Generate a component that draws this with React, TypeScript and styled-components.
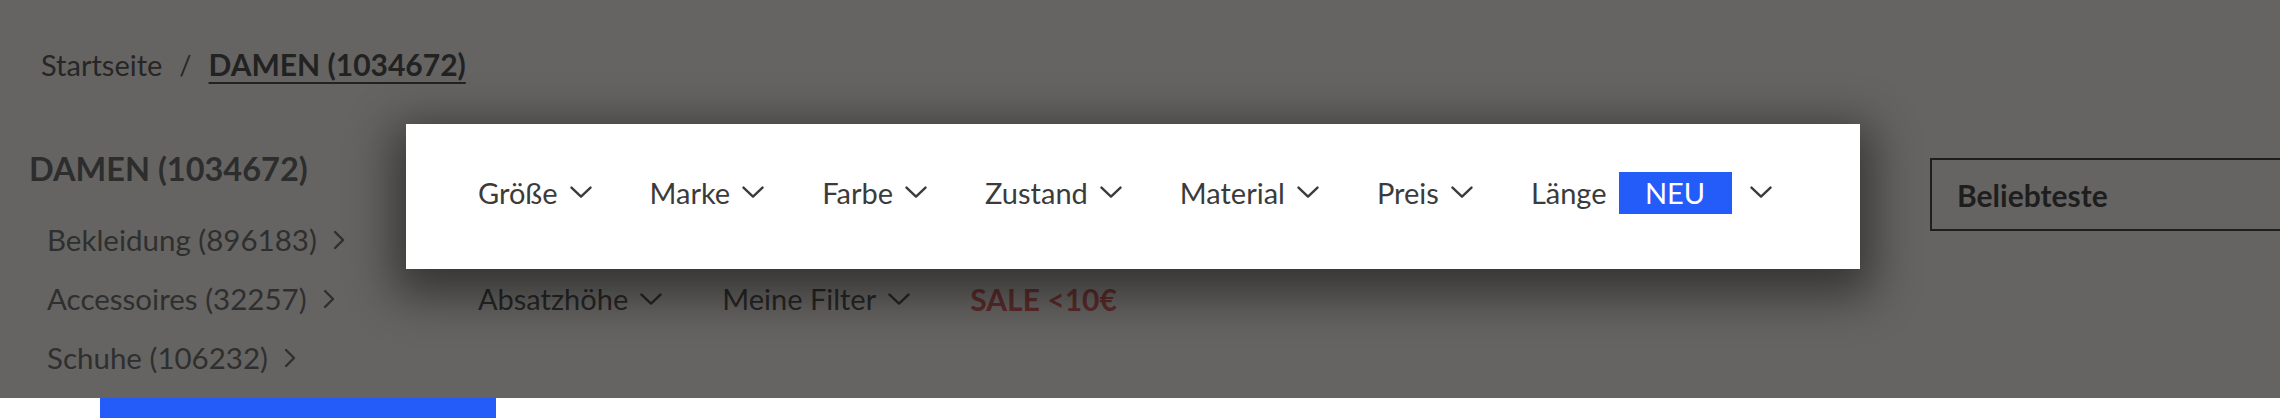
import styled, { createGlobalStyle } from "styled-components";

const GlobalStyle = createGlobalStyle`
    body {
        margin: 0;
        background: #ffffff;
        font-family: Lato, "Open Sans", sans-serif;
        overflow: hidden;
    }
`;

const Chevron = ({ dir = "down", size = 22 }: { dir?: "down" | "right"; size?: number }) =>
    dir === "down" ? (
        <svg width={size} height={size * 0.55} viewBox="0 0 22 12" fill="none">
            <path d="M1.5 1.5 L11 10.5 L20.5 1.5" stroke="currentColor" strokeWidth="2.4" strokeLinecap="round" strokeLinejoin="round" />
        </svg>
    ) : (
        <svg width={size * 0.55} height={size} viewBox="0 0 12 22" fill="none">
            <path d="M2 3 L10 11 L2 19" stroke="currentColor" strokeWidth="2.4" strokeLinecap="round" strokeLinejoin="round" />
        </svg>
    );

const filtersTop = ["Größe", "Marke", "Farbe", "Zustand", "Material", "Preis"];
const filtersBottom = ["Absatzhöhe", "Meine Filter"];
const categories = [
    { name: "Bekleidung", count: 896183 },
    { name: "Accessoires", count: 32257 },
    { name: "Schuhe", count: 106232 },
];

const App = () => {
    return (
        <>
            <GlobalStyle />
            <Page>
                <Dimmed>
                    <Breadcrumb>
                        <Crumb>Startseite</Crumb>
                        <Slash>/</Slash>
                        <CrumbActive>DAMEN (1034672)</CrumbActive>
                    </Breadcrumb>
                    <Main>
                        <Sidebar>
                            <SideTitle>DAMEN (1034672)</SideTitle>
                            <CategoryList>
                                {categories.map((c) => (
                                    <CategoryItem key={c.name}>
                                        {c.name} ({c.count})
                                        <Chevron dir="right" size={22} />
                                    </CategoryItem>
                                ))}
                            </CategoryList>
                        </Sidebar>
                        <FilterArea>
                            <Spotlight>
                                {filtersTop.map((f) => (
                                    <FilterButton key={f}>
                                        {f}
                                        <Chevron />
                                    </FilterButton>
                                ))}
                                <FilterButton>
                                    Länge
                                    <NewBadge>NEU</NewBadge>
                                    <Chevron />
                                </FilterButton>
                            </Spotlight>
                            <FilterRow>
                                {filtersBottom.map((f) => (
                                    <FilterButton key={f} $dim>
                                        {f}
                                        <Chevron />
                                    </FilterButton>
                                ))}
                                <SaleLink>SALE &lt;10€</SaleLink>
                            </FilterRow>
                        </FilterArea>
                        <SortSelect>Beliebteste</SortSelect>
                    </Main>
                </Dimmed>
                <BottomStrip>
                    <BlueBar />
                </BottomStrip>
            </Page>
        </>
    );
};

export default App;

// Styled-components
const Page = styled.div`
    width: 2280px;
    height: 418px;
    display: flex;
    flex-direction: column;
    `;

const Dimmed = styled.div`
    height: 398px;
    background: #656462;
    display: flex;
    flex-direction: column;
    overflow: hidden;
    `;

const Breadcrumb = styled.nav`
    display: flex;
    align-items: center;
    gap: 17px;
    padding: 44px 0 0 41px;
    height: 40px;
    font-size: 29px;
    color: #262626;
    `;

const Crumb = styled.span``;

const Slash = styled.span`
    font-size: 27px;
    `;

const CrumbActive = styled.span`
    font-size: 30px;
    font-weight: 700;
    color: #222222;
    text-decoration: underline;
    text-decoration-thickness: 2px;
    text-underline-offset: 6px;
    `;

const Main = styled.div`
    display: flex;
    align-items: flex-start;
    padding-top: 40px;
    `;

const Sidebar = styled.aside`
    width: 377px;
    padding-left: 29px;
    padding-top: 25px;
    `;

const SideTitle = styled.h2`
    margin: 0;
    font-size: 32.5px;
    font-weight: 700;
    color: #2d2d2d;
    line-height: 40px;
    `;

const CategoryList = styled.ul`
    list-style: none;
    margin: 31px 0 0;
    padding: 0 0 0 18px;
    display: flex;
    flex-direction: column;
    gap: 19px;
    `;

const CategoryItem = styled.li`
    display: flex;
    align-items: center;
    gap: 16px;
    font-size: 29.5px;
    line-height: 40px;
    color: #2f2f2f;
    `;

const FilterArea = styled.div`
    width: 1454px;
    display: flex;
    flex-direction: column;
    `;

const Spotlight = styled.div`
    height: 145px;
    background: #ffffff;
    display: flex;
    align-items: center;
    gap: 58px;
    padding: 0 72px 8px;
    box-sizing: border-box;
    box-shadow: 0 14px 44px 12px rgba(0, 0, 0, 0.48);
    position: relative;
    z-index: 1;
    `;

const FilterRow = styled.div`
    display: flex;
    align-items: center;
    gap: 60px;
    padding: 10px 72px 0;
    `;

const FilterButton = styled.span<{ $dim?: boolean }>`
    display: inline-flex;
    align-items: center;
    gap: 12px;
    font-size: 29px;
    line-height: 40px;
    color: ${(p) => (p.$dim ? "#262626" : "#3b3b3b")};
    `;

const NewBadge = styled.span`
    display: inline-flex;
    align-items: center;
    justify-content: center;
    width: 113px;
    height: 42px;
    margin-right: 6px;
    background: #245cf9;
    color: #ffffff;
    font-size: 29px;
    `;

const SaleLink = styled.span`
    font-size: 30px;
    font-weight: 700;
    line-height: 40px;
    color: #5c2b2b;
    `;

const SortSelect = styled.div`
    margin-left: 70px;
    margin-top: 34px;
    flex: 1;
    height: 73px;
    box-sizing: border-box;
    border: 2px solid #1e1e1e;
    border-right: none;
    display: flex;
    align-items: center;
    padding-left: 25px;
    font-size: 30px;
    font-weight: 700;
    color: #1e1e1e;
    `;

const BottomStrip = styled.div`
    height: 20px;
    background: #ffffff;
    padding-left: 100px;
    `;

const BlueBar = styled.div`
    width: 396px;
    height: 100%;
    background: #245cf9;
    `;
